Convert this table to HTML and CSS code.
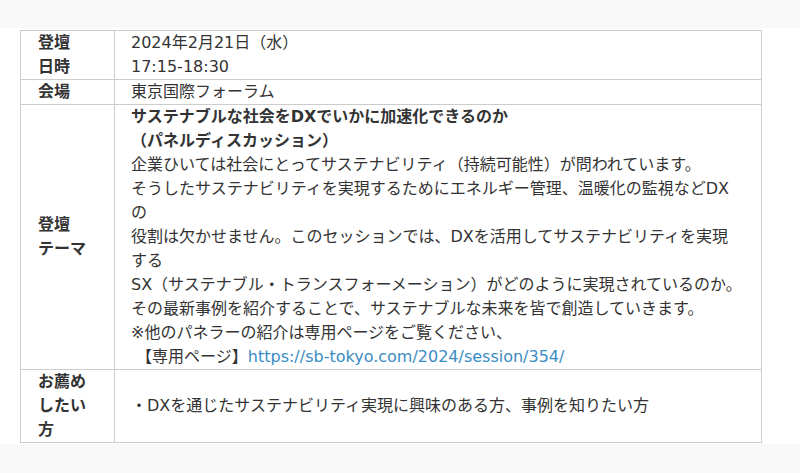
FILE: index.html
```html
<!DOCTYPE html>
<html lang="ja">
<head>
<meta charset="utf-8">
<link rel="stylesheet" href="styles.css">
</head>
<body>
<div class="band">
<table class="info">
  <tr>
    <th class="label">登壇<br>日時</th>
    <td class="value">2024年2月21日（水）<br>17:15-18:30</td>
  </tr>
  <tr>
    <th class="label">会場</th>
    <td class="value">東京国際フォーラム</td>
  </tr>
  <tr>
    <th class="label mid">登壇<br>テーマ</th>
    <td class="value"><strong>サステナブルな社会をDXでいかに加速化できるのか<br>（パネルディスカッション）</strong><br>企業ひいては社会にとってサステナビリティ（持続可能性）が問われています。<br>そうしたサステナビリティを実現するためにエネルギー管理、温暖化の監視などDX<br>の<br>役割は欠かせません。このセッションでは、DXを活用してサステナビリティを実現<br>する<br>SX（サステナブル・トランスフォーメーション）がどのように実現されているのか。<br>その最新事例を紹介することで、サステナブルな未来を皆で創造していきます。<br>※他のパネラーの紹介は専用ページをご覧ください、<br>&nbsp;【専用ページ】<a class="link" href="#">https://sb-tokyo.com/2024/session/354/</a></td>
  </tr>
  <tr>
    <th class="label mid">お薦めしたい方</th>
    <td class="value mid">・DXを通じたサステナビリティ実現に興味のある方、事例を知りたい方</td>
  </tr>
</table>
</div>
</body>
</html>
```

FILE: styles.css
```css
html, body {
  margin: 0;
  padding: 0;
  background: #f9f9f9;
}
body {
  font-family: "DejaVu Sans", "Noto Sans CJK JP", sans-serif;
  font-size: 16px;
  line-height: 24px;
  color: #333333;
  padding-top: 28px;
  height: 473px;
  box-sizing: border-box;
}
.band {
  background: #ffffff;
  padding: 2px 0 1px 20px;
}
.info {
  border-collapse: collapse;
  width: 742px;
}
.info th, .info td {
  border: 1px solid #cccccc;
  padding: 0;
}
.label {
  width: 50px;
  padding: 0 26px 0 17px !important;
  text-align: left;
  vertical-align: top;
  font-weight: bold;
}
.value {
  padding: 0 4px 0 16px !important;
  vertical-align: top;
  white-space: nowrap;
}
.mid {
  vertical-align: middle !important;
}
.value strong {
  font-weight: bold;
}
.link {
  color: #3a8cc4;
  text-decoration: none;
}
```
